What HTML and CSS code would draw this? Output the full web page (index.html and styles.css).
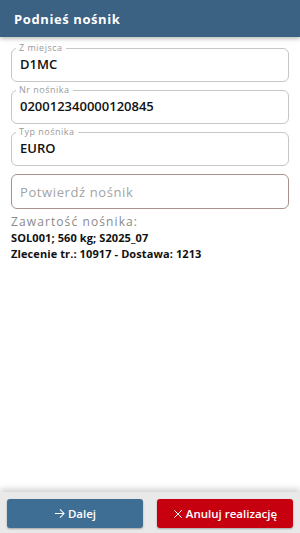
FILE: index.html
```html
<!DOCTYPE html>
<html lang="pl">
<head>
<meta charset="utf-8">
<link rel="stylesheet" href="styles.css">
</head>
<body>
<div class="app">
  <header class="topbar"><h1 class="title">Podnieś nośnik</h1></header>
  <main class="content">
    <fieldset class="field">
      <legend class="field-label">Z miejsca</legend>
      <div class="field-value">D1MC</div>
    </fieldset>
    <fieldset class="field">
      <legend class="field-label">Nr nośnika</legend>
      <div class="field-value">020012340000120845</div>
    </fieldset>
    <fieldset class="field">
      <legend class="field-label">Typ nośnika</legend>
      <div class="field-value">EURO</div>
    </fieldset>
    <div class="input-box">
      <span class="placeholder">Potwierdź nośnik</span>
    </div>
    <div class="info">
      <div class="info-label">Zawartość nośnika:</div>
      <div class="info-line">SOL001; 560 kg; S2025_07</div>
      <div class="info-line">Zlecenie tr.: 10917 - Dostawa: 1213</div>
    </div>
  </main>
  <footer class="bottombar">
    <button class="btn btn-next">
      <svg class="icon" viewBox="0 0 12 12" width="11" height="11"><path d="M1 6h10M6.5 1.5L11 6l-4.5 4.5" fill="none" stroke="currentColor" stroke-width="1.1"/></svg>
      <span>Dalej</span>
    </button>
    <button class="btn btn-cancel">
      <svg class="icon" viewBox="0 0 12 12" width="10" height="10"><path d="M1.5 1.5l9 9M10.5 1.5l-9 9" fill="none" stroke="currentColor" stroke-width="1.2"/></svg>
      <span>Anuluj realizację</span>
    </button>
  </footer>
</div>
</body>
</html>
```
FILE: styles.css
```css
* { box-sizing: border-box; }
html, body { margin: 0; padding: 0; background: #fff; }
body { font-family: "Open Sans", "DejaVu Sans", sans-serif; color: #111; }
.app { width: 300px; height: 533px; display: flex; flex-direction: column; }
.topbar {
  height: 37px; background: #3b6183; display: flex; align-items: center;
  padding: 0 14px; box-shadow: 0 2px 4px rgba(0,0,0,0.25); position: relative; z-index: 1;
}
.title { margin: 0; color: #fff; font-size: 13px; font-weight: 700; letter-spacing: 0.6px; }
.content { flex: 1; padding: 6px 11px 0; display: flex; flex-direction: column; }
.field {
  margin: 0; padding: 0 8px; border: 1px solid #c6c6c6; border-radius: 6px;
  height: 39px; min-width: 0;
}
.field + .field { margin-top: 3px; }
.field-label {
  font-size: 9px; line-height: 10px; color: #9a9a9a; padding: 0 3px; margin-left: -4px; letter-spacing: 0.5px;
}
.field-value { font-size: 13px; font-weight: 600; line-height: 18px; padding-top: 2px; color: #111; }
.input-box {
  margin-top: 8px; height: 35px; border: 1px solid #a99289; border-radius: 6px;
  display: flex; align-items: center; padding: 0 8px;
}
.placeholder { font-size: 13px; color: #a3a3a3; letter-spacing: 0.6px; }
.info { margin-top: 5px; }
.info-label { font-size: 12px; color: #8a8a8a; line-height: 16px; letter-spacing: 1.1px; }
.info-line { font-size: 11px; font-weight: 700; line-height: 16px; color: #111; letter-spacing: 0.1px; }
.bottombar {
  height: 41px; background: #e9e9e9; display: flex; gap: 14px; padding: 7px 7px 5px;
  box-shadow: 0 -3px 6px rgba(0,0,0,0.18);
}
.btn {
  flex: 1; border: none; border-radius: 3px; color: #fff; font-family: inherit;
  font-size: 11.5px; font-weight: 600; display: flex; align-items: center; justify-content: center; gap: 3px;
  box-shadow: 0 1px 2px rgba(0,0,0,0.3); padding: 0;
}
.btn-next { background: #3f6e95; }
.btn-cancel { background: #c6000f; }
.icon { display: block; }
```
